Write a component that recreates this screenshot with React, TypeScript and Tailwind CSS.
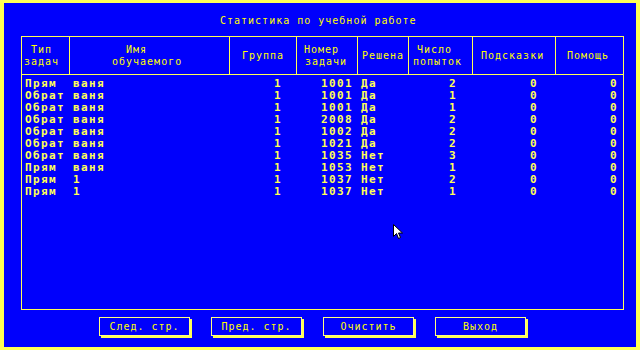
type Row = {
  kind: string
  name: string
  group: string
  num: string
  solved: string
  tries: string
  hints: string
  help: string
}

const ROWS: Row[] = [
  { kind: 'Прям', name: 'ваня', group: '1', num: '1001', solved: 'Да', tries: '2', hints: '0', help: '0' },
  { kind: 'Обрат', name: 'ваня', group: '1', num: '1001', solved: 'Да', tries: '1', hints: '0', help: '0' },
  { kind: 'Обрат', name: 'ваня', group: '1', num: '1001', solved: 'Да', tries: '1', hints: '0', help: '0' },
  { kind: 'Обрат', name: 'ваня', group: '1', num: '2008', solved: 'Да', tries: '2', hints: '0', help: '0' },
  { kind: 'Обрат', name: 'ваня', group: '1', num: '1002', solved: 'Да', tries: '2', hints: '0', help: '0' },
  { kind: 'Обрат', name: 'ваня', group: '1', num: '1021', solved: 'Да', tries: '2', hints: '0', help: '0' },
  { kind: 'Обрат', name: 'ваня', group: '1', num: '1035', solved: 'Нет', tries: '3', hints: '0', help: '0' },
  { kind: 'Прям', name: 'ваня', group: '1', num: '1053', solved: 'Нет', tries: '1', hints: '0', help: '0' },
  { kind: 'Прям', name: '1', group: '1', num: '1037', solved: 'Нет', tries: '2', hints: '0', help: '0' },
  { kind: 'Прям', name: '1', group: '1', num: '1037', solved: 'Нет', tries: '1', hints: '0', help: '0' },
]

const GRID = 'grid grid-cols-[48px_160px_67px_61px_51px_64px_83px_67px]'
const BUTTONS = ['След. стр.', 'Пред. стр.', 'Очистить', 'Выход']

function HeadCell({ lines, last = false }: { lines: [string, string][]; last?: boolean }) {
  return (
    <div className={`flex flex-col justify-center ${last ? '' : 'border-r border-[#ffff55]'}`}>
      {lines.map(([text, pad]) => (
        <div key={text} className={`leading-[12px] whitespace-nowrap ${pad}`}>
          {text}
        </div>
      ))}
    </div>
  )
}

export default function App() {
  return (
    <div className="relative w-[640px] h-[350px] bg-[#0000fc] border-[#ffff55] border-t-[3px] border-b-[3px] border-l-[4px] border-r-[4px] font-['DejaVu_Sans_Mono',monospace] text-[#ffff00] overflow-hidden">
      <div className="mt-[12px] pl-[216px] text-[10px] tracking-[1px] leading-[12px] whitespace-nowrap">
        Статистика по учебной работе
      </div>

      <div className="ml-[17px] mt-[9px] w-[603px] h-[274px] border border-[#ffff55]">
        <div className={`${GRID} h-[38px] border-b border-[#ffff55] text-[10px] tracking-[1px]`}>
          <HeadCell lines={[['Тип', 'pl-[9px]'], ['задач', 'pl-[2px]']]} />
          <HeadCell lines={[['Имя', 'pl-[56px]'], ['обучаемого', 'pl-[42px]']]} />
          <HeadCell lines={[['Группа', 'pl-[12px]']]} />
          <HeadCell lines={[['Номер', 'pl-[7px]'], ['задачи', 'pl-[8px]']]} />
          <HeadCell lines={[['Решена', 'pl-[4px]']]} />
          <HeadCell lines={[['Число', 'pl-[8px]'], ['попыток', 'pl-[4px]']]} />
          <HeadCell lines={[['Подсказки', 'pl-[8px]']]} />
          <HeadCell lines={[['Помощь', 'pl-[11px]']]} last />
        </div>

        <div className="pt-[3px] text-[11px] font-bold tracking-[1.4px] leading-[12px] text-[#ffff55]">
          {ROWS.map((r, i) => (
            <div key={i} className={`${GRID} h-[12px] whitespace-nowrap`}>
              <div className="pl-[3px]">{r.kind}</div>
              <div className="pl-[3px]">{r.name}</div>
              <div className="text-right pr-[15px]">{r.group}</div>
              <div className="text-right pr-[5px]">{r.num}</div>
              <div className="pl-[3px]">{r.solved}</div>
              <div className="text-right pr-[16px]">{r.tries}</div>
              <div className="text-right pr-[18px]">{r.hints}</div>
              <div className="text-right pr-[5px]">{r.help}</div>
            </div>
          ))}
        </div>
      </div>

      <div className="flex gap-[21px] ml-[95px] mt-[7px]">
        {BUTTONS.map((b) => (
          <div
            key={b}
            className="w-[91px] h-[19px] border border-[#ffff80] shadow-[2px_2px_0_#ffff55] flex items-center justify-center text-[10px] tracking-[1px] leading-[12px] whitespace-nowrap"
          >
            {b}
          </div>
        ))}
      </div>

      <svg className="absolute left-[389px] top-[221px]" width="10" height="17" viewBox="0 0 10 17">
        <path d="M0.5 0.5 L0.5 12.5 L3.5 9.5 L5.5 14.5 L7.5 13.5 L5.5 9 L9.5 9 Z" fill="#ffffff" stroke="#000000" strokeWidth="1" />
      </svg>
    </div>
  )
}
